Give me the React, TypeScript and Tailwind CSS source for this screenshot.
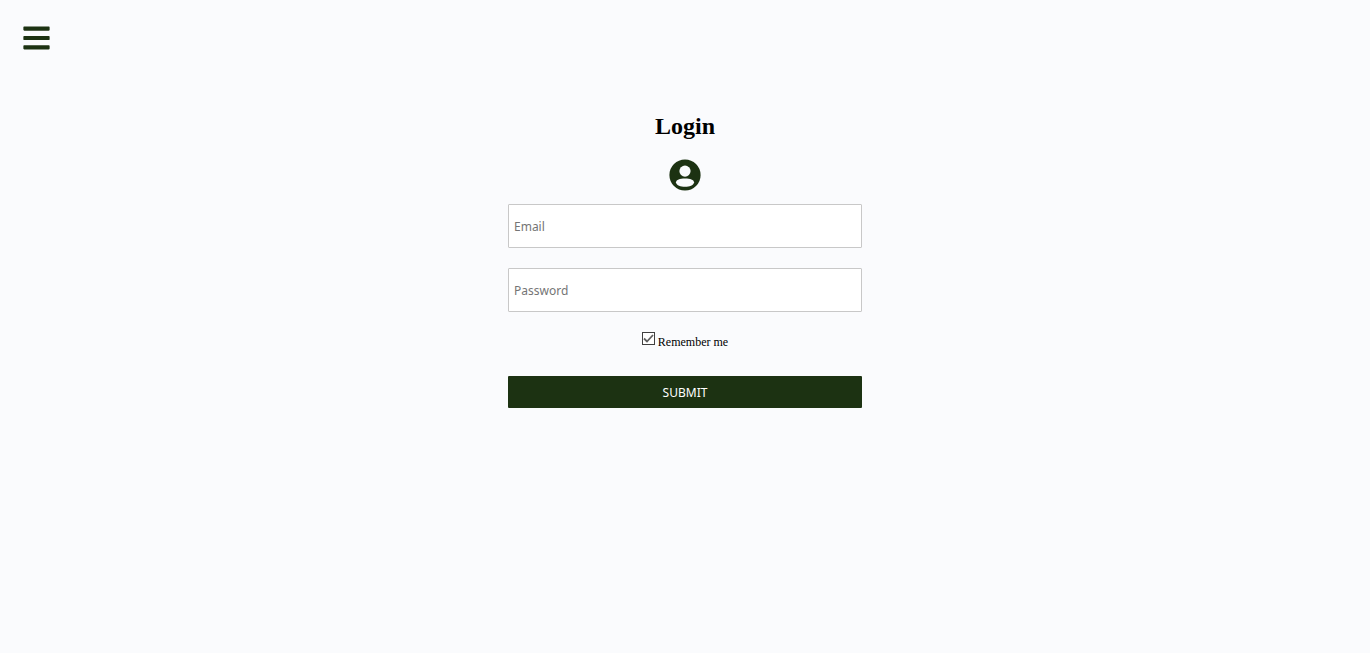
import { useState } from "react";
import type { InputHTMLAttributes } from "react";
import { FaBars } from "react-icons/fa";

function Field(props: InputHTMLAttributes<HTMLInputElement> & { label: string }) {
  const { label, ...rest } = props;
  return (
    <input
      aria-label={label}
      placeholder={label}
      className="h-11 w-full rounded-[1px] border border-[#c8c8c8] bg-white px-[5px] font-['Noto_Sans',sans-serif] text-[12px] text-black placeholder:text-[#757575]"
      {...rest}
    />
  );
}

function UserIcon() {
  return (
    <svg viewBox="0 0 32 32" className="mt-[19px] size-8" aria-hidden="true">
      <circle cx="16" cy="16" r="15.6" fill="#1c3212" />
      <circle cx="16" cy="12.1" r="5.6" fill="#fafbfd" />
      <path
        d="M6.9 23.4C7.4 20.8 10.6 19.6 16 19.6S24.6 20.8 25.1 23.4C24.2 26.3 20.6 27.7 16 27.7S7.8 26.3 6.9 23.4Z"
        fill="#fafbfd"
      />
    </svg>
  );
}

export default function App() {
  const [remember, setRemember] = useState(true);

  return (
    <div className="min-h-screen bg-[#fafbfd] font-['Liberation_Serif',serif] text-black">
      <header className="px-[23px] pt-[23px]">
        <button type="button" aria-label="Open menu" className="block text-[#1c3212]">
          <FaBars className="h-[30px] w-[27px]" />
        </button>
      </header>
      <main className="mx-auto flex w-full max-w-[354px] flex-col items-center pt-[59px]">
        <h2 className="text-[24px] leading-[28px] font-bold">Login</h2>
        <UserIcon />
        <form className="mt-[13px] flex w-full flex-col items-center" onSubmit={(e) => e.preventDefault()}>
          <div className="flex w-full flex-col gap-5">
            <Field label="Email" type="email" />
            <Field label="Password" type="password" />
          </div>
          <label className="mt-5 flex items-start gap-[3px] text-[12px] leading-[20px]">
            <span className="grid size-[13px]">
              <input
                type="checkbox"
                checked={remember}
                onChange={(e) => setRemember(e.target.checked)}
                className="peer col-start-1 row-start-1 size-[13px] appearance-none border border-[#404040] bg-white"
              />
              <svg
                viewBox="0 0 13 13"
                className="pointer-events-none col-start-1 row-start-1 hidden size-[13px] peer-checked:block"
                fill="none"
                stroke="#606060"
                strokeWidth="1.8"
              >
                <path d="M2 6.5 5 9.5 11 3" />
              </svg>
            </span>
            Remember me
          </label>
          <button
            type="submit"
            className="mt-6 w-full rounded-[1px] bg-[#1c3212] pt-[7px] pb-[5px] font-['Noto_Sans',sans-serif] text-[12px] leading-[20px] text-white"
          >
            SUBMIT
          </button>
        </form>
      </main>
    </div>
  );
}
